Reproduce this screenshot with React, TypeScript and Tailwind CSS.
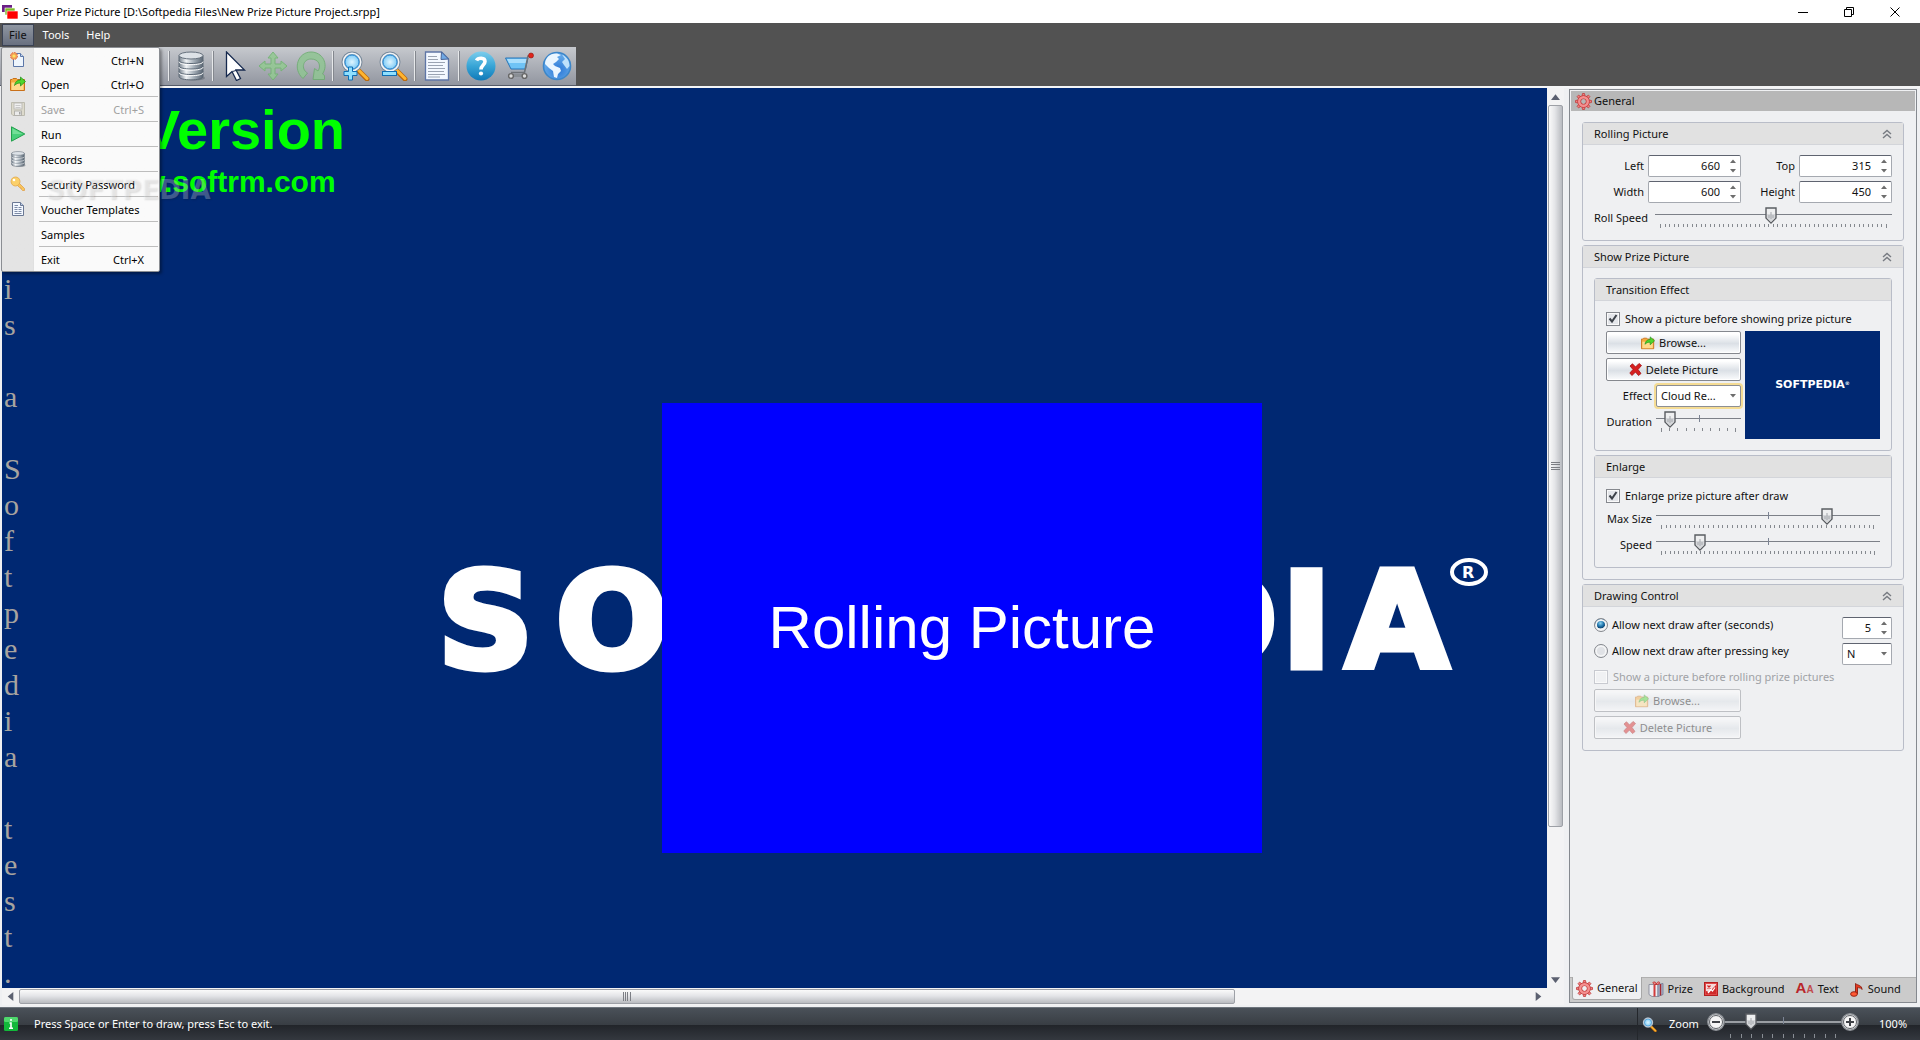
import React, { useState } from "react";

type Kids = { children?: React.ReactNode };

/* ---------- icons ---------- */

const AppIcon = () => (
  <svg width="16" height="14" viewBox="0 0 16 14" aria-hidden="true">
    <rect x="0" y="0" width="10" height="7" fill="#6b1f86" />
    <rect x="3" y="3" width="10" height="7" fill="#7db928" stroke="#fff" strokeWidth=".6" />
    <rect x="5" y="6" width="11" height="8" fill="#f00" stroke="#fff" strokeWidth=".6" />
  </svg>
);

const NewIcon = () => (
  <svg width="16" height="16" viewBox="0 0 16 16" aria-hidden="true">
    <path d="M3.500 3.500V14.500H13.500V4.500L10.500 1.500H5Z" fill="#eef5fc" stroke="#5c77a8" />
    <path d="M10.500 1.500V4.500H13.500" fill="#c4d6ee" stroke="#5c77a8" />
    <circle cx="4" cy="4" r="3.500" fill="#f0a05a" />
    <circle cx="4" cy="4" r="3.500" fill="none" stroke="#e2603a" strokeDasharray="1.500 1.200" />
    <circle cx="4" cy="4" r="1.600" fill="#ffe45c" />
  </svg>
);

const OpenIcon = ({ size = 16 }: { size?: number }) => (
  <svg width={size} height={size} viewBox="0 0 16 16" aria-hidden="true">
    <path d="M.5 14.500V3.500H2L3 2.500H6.500L7.500 3.500H14.500V14.500Z" fill="#f5a93b" stroke="#c9701a" />
    <path d="M1.500 14V6.500H13.500V14Z" fill="#ffd98a" />
    <path d="M4.500 9.500C5 6 7 4 10.500 4V1L15.500 5.500L10.500 10V7C8 7 6 7.800 4.500 9.500Z" fill="#4fd62c" stroke="#1c8a17" strokeWidth=".7" />
  </svg>
);

const SaveIcon = () => (
  <svg width="16" height="16" viewBox="0 0 16 16" aria-hidden="true" opacity=".45">
    <path d="M1.500 1.500H14.500V14.500H3L1.500 13Z" fill="#d6d0b0" stroke="#8d8a70" />
    <rect x="4" y="2" width="8" height="6" fill="#fff" stroke="#8d8b80" />
    <path d="M5.500 4.500H10.500M5.500 6.500H10.500" stroke="#aaa" />
    <rect x="4.500" y="10" width="7" height="4.500" fill="#f4f4f4" stroke="#77756a" />
    <rect x="9" y="11" width="1.500" height="2.500" fill="#555" />
  </svg>
);

const RunIcon = () => (
  <svg width="16" height="16" viewBox="0 0 16 16" aria-hidden="true">
    <path d="M1.500 .8L14.800 8L1.500 15.200Z" fill="#48cf7a" stroke="#22a04c" />
    <path d="M2.500 2.500L12.500 8H2.500Z" fill="#86e6a4" opacity=".7" />
  </svg>
);

const DbIcon = ({ size = 16, id }: { size?: number; id: string }) => (
  <svg width={size} height={size} viewBox="0 0 30 30" aria-hidden="true">
    <defs>
      <linearGradient id={id} x1="0" x2="1">
        <stop offset="0" stopColor="#75808c" />
        <stop offset=".3" stopColor="#f1f4f6" />
        <stop offset=".6" stopColor="#a9b3bc" />
        <stop offset="1" stopColor="#5a6673" />
      </linearGradient>
    </defs>
    <ellipse cx="19" cy="27" rx="10" ry="2.500" fill="#555d68" opacity=".5" />
    <path d="M3 4.500V25.500C3 30 27 30 27 25.500V4.500Z" fill={`url(#${id})`} stroke="#5d6874" />
    <ellipse cx="15" cy="4.500" rx="12" ry="3.500" fill="#dde2e7" stroke="#66717d" />
    {[9.5, 15, 20.5].map((y) => (
      <g key={y} fill="none">
        <path d={`M3 ${y}C3 ${y + 4} 27 ${y + 4} 27 ${y}`} stroke="#5f6b78" />
        <path d={`M3 ${y + 1.2}C3 ${y + 5.2} 27 ${y + 5.2} 27 ${y + 1.2}`} stroke="#fff" />
      </g>
    ))}
  </svg>
);

const KeyIcon = () => (
  <svg width="16" height="16" viewBox="0 0 16 16" aria-hidden="true">
    <path d="M6.500 8.500L8.500 6.500L14.500 12.500V14.500H12.500L11.500 13.500V12.500H10.500V11.500H9.500Z" fill="#f9c65c" stroke="#dfa04a" strokeWidth=".8" />
    <circle cx="5.500" cy="5.500" r="4.500" fill="#fbd06a" stroke="#dfa64a" strokeWidth=".8" />
    <circle cx="4" cy="4" r="1.300" fill="#fff" />
  </svg>
);

const DocIcon = ({ size = 16 }: { size?: number }) => (
  <svg width={size} height={size} viewBox="0 0 30 30" aria-hidden="true">
    <path d="M3.500 1H19.500L26.500 8V29H3.500Z" fill="#f3f8ff" stroke="#5f76a6" strokeWidth="1.300" />
    <path d="M19.500 1L19 8.500L26.500 8Z" fill="#6fa8e4" stroke="#4a6496" />
    <path d="M6 5.500H15M6 8.500H16M6 11.500H23M6 14.500H21M6 17.500H23M6 20.500H22M6 23.500H23M6 26H18" stroke="#9aa3b2" strokeWidth="1.200" />
  </svg>
);

const VoucherIcon = () => (
  <svg width="16" height="16" viewBox="0 0 16 16" aria-hidden="true">
    <path d="M2.500 1.500H10.500L13.500 4.500V14.500H2.500Z" fill="#f3f8ff" stroke="#6a7894" />
    <path d="M10.500 1.500V4.500H13.500" fill="#b9cbe8" stroke="#6a7894" />
    <path d="M4.500 4.500H8M4.500 6.500H7.500M8.500 6.500H11.500M4.500 8.500H7.500M8.500 8.500H11.500M4.500 10.500H7.500M8.500 10.500H11.500M4.500 12.500H11.500" stroke="#7d8ba6" />
  </svg>
);

const CursorIcon = () => (
  <svg width="30" height="30" viewBox="0 0 30 30" aria-hidden="true">
    <path d="M6.500 1V25.500L12 20.500L16.500 29.500L20.500 27.500L16 19H24.500Z" fill="#fff" stroke="#16294e" strokeWidth="1.300" />
    <path d="M12.500 20.500L16 19.500" stroke="#16294e" strokeWidth="1" />
  </svg>
);

const MoveIcon = () => (
  <svg width="30" height="30" viewBox="0 0 30 30" aria-hidden="true" opacity=".85">
    <path d="M15 1L20 7H17V13H23V10L29 15L23 20V17H17V23H20L15 29L10 23H13V17H7V20L1 15L7 10V13H13V7H10Z" fill="#93c992" stroke="#6fb56f" />
  </svg>
);

const RotateIcon = () => (
  <svg width="32" height="30" viewBox="0 0 32 30" aria-hidden="true" opacity=".85">
    <path d="M8 27.500L12.500 22C5.500 18 8 8 16 8C24 8 26.500 15 23 20L19.500 17.500L18 28.500H29.500V24.500L27.500 23C34 13 27.500 1 16 1C3 1-3 18 8 27.500Z" fill="#90c593" stroke="#6dae70" />
  </svg>
);

const LensIcon = ({ size = 30, mode, id }: { size?: number; mode?: "in" | "out"; id: string }) => (
  <svg width={size} height={size} viewBox="0 0 30 30" aria-hidden="true">
    <defs>
      <radialGradient id={id}>
        <stop offset="0" stopColor="#dff5ff" />
        <stop offset="1" stopColor="#66c1f4" />
      </radialGradient>
    </defs>
    <path d="M17 18L27 28" stroke="#b96a12" strokeWidth="5" strokeLinecap="round" />
    <path d="M17.500 18L27 27.500" stroke="#ffb52e" strokeWidth="3" strokeLinecap="round" />
    <circle cx="12" cy="11" r="9" fill={`url(#${id})`} stroke="#778899" strokeWidth="3" />
    <circle cx="12" cy="11" r="8.700" fill="none" stroke="#f2f5f8" strokeWidth="1.600" />
    <circle cx="12" cy="11" r="7" fill="none" stroke="#2c86cf" />
    {mode === "in" && <path d="M8.500 16H12.500V20.500H17V24.500H12.500V29H8.500V24.500H4V20.500H8.500Z" fill="#8fe0ff" stroke="#0e6fb5" />}
    {mode === "out" && <rect x="4.500" y="20.500" width="14" height="4" fill="#8fe0ff" stroke="#0e6fb5" />}
  </svg>
);

const HelpIcon = () => (
  <svg width="30" height="30" viewBox="0 0 30 30" aria-hidden="true">
    <defs>
      <linearGradient id="help-fill" x2="0" y2="1">
        <stop offset="0" stopColor="#7ccdec" />
        <stop offset=".5" stopColor="#38a5d6" />
        <stop offset="1" stopColor="#0f79b8" />
      </linearGradient>
    </defs>
    <circle cx="15" cy="15" r="14.500" fill="url(#help-fill)" />
    <path d="M10.500 9.500C12 6.500 19 6 19 10.500C19 14 15 14 15 18.500" fill="none" stroke="#fff" strokeWidth="3.600" />
    <circle cx="15" cy="22.500" r="2.100" fill="#fff" />
  </svg>
);

const CartIcon = () => (
  <svg width="30" height="30" viewBox="0 0 30 30" aria-hidden="true">
    <path d="M1.500 7H24L21.500 18H7Z" fill="#6fc3f5" stroke="#2775b8" />
    <path d="M3 8H23L22.300 12H5Z" fill="#a9defc" />
    <path d="M27 5H24L20.500 21.500H7" fill="none" stroke="#6d7278" strokeWidth="1.600" />
    <path d="M4 24.500H23" stroke="#898e94" strokeWidth="3" />
    <circle cx="7" cy="25" r="2.400" fill="#ddd" stroke="#666" strokeWidth="1.400" />
    <circle cx="20.500" cy="25" r="2.400" fill="#ddd" stroke="#666" strokeWidth="1.400" />
    <circle cx="27" cy="4.500" r="2.500" fill="#e0251b" stroke="#8d1610" strokeWidth=".6" />
  </svg>
);

const GlobeIcon = () => (
  <svg width="30" height="30" viewBox="0 0 30 30" aria-hidden="true">
    <defs>
      <radialGradient id="globe-fill" cx=".55" cy=".65">
        <stop offset="0" stopColor="#2c78d6" />
        <stop offset="1" stopColor="#5fa5e8" />
      </radialGradient>
    </defs>
    <circle cx="15" cy="15" r="13.500" fill="url(#globe-fill)" stroke="#3c86c9" strokeWidth="1.600" />
    <path d="M3 13C3 7 8 2 15 2.500L19 4L15 6L17 8L14 11L11 13L13 15L18 17L19 20L16 23L15 27L12 26L11 20L7 17Z" fill="#eaf6ff" />
    <path d="M20 3.500C25 6 27.500 10 27.500 15L25 18L22 14L20 11L23 8Z" fill="#bfe2fb" />
  </svg>
);

const GearIcon = () => (
  <svg width="17" height="17" viewBox="0 0 17 17" aria-hidden="true">
    {[0, 45, 90, 135, 180, 225, 270, 315].map((a) => (
      <path key={a} d="M7 3.500L7.500 .5H9.500L10 3.500Z" fill="#f08080" stroke="#c23b3b" strokeWidth=".8" transform={`rotate(${a} 8.500 8.500)`} />
    ))}
    <circle cx="8.500" cy="8.500" r="4.300" fill="none" stroke="#c23b3b" strokeWidth="3.800" />
    <circle cx="8.500" cy="8.500" r="4.300" fill="none" stroke="#f49090" strokeWidth="2.400" />
  </svg>
);

const GiftIcon = () => (
  <svg width="16" height="16" viewBox="0 0 16 16" aria-hidden="true">
    <path d="M1 3.500H10V15.500H4L1 13.500Z" fill="#ecedf2" stroke="#7d8292" strokeWidth=".8" />
    <path d="M10 3.500L15 2.500V13.500L10 15.500Z" fill="#a9b4cc" stroke="#6c7690" strokeWidth=".8" />
    <path d="M6.500 3.500V15.500" stroke="#d23c3c" strokeWidth="2" />
    <path d="M12.500 3V14.500" stroke="#a42a30" strokeWidth="1.500" />
    <path d="M8 3.500C5 3.500 4 1 6 1S8 2 8 3.500C8.500 1 12 0 11.500 2S9 3 8 3.500" fill="#f4a3a3" stroke="#c02f2f" />
  </svg>
);

const BackgroundIcon = () => (
  <svg width="14" height="14" viewBox="0 0 14 14" aria-hidden="true">
    <rect x=".5" y=".5" width="13" height="13" fill="#e04848" stroke="#b52020" />
    <rect x="2" y="2" width="10" height="10" fill="#f6dada" />
    <path d="M2 12V9L5 10L12 3V12Z" fill="#cf2b2b" />
    <path d="M4 11L7 7.500L8.500 9L11 5.500" stroke="#fff" strokeWidth="1.200" fill="none" />
    <path d="M3.500 3.500L6.500 6.500M3.500 6.500L6.500 3.500" stroke="#c22" strokeWidth="1.200" />
  </svg>
);

const TextIcon = () => (
  <span className="flex items-baseline font-['Liberation_Sans'] font-bold text-[#b9262a]" aria-hidden="true">
    <span className="text-[15px] leading-[14px]">A</span>
    <span className="text-[10px] leading-[14px] text-[#c04a4c]">A</span>
  </span>
);

const NoteIcon = () => (
  <svg width="14" height="15" viewBox="0 0 14 15" aria-hidden="true">
    <path d="M5.500 11.500V1.500C7.500 3.500 12 3 12 7.500C12 5.500 8.500 6 7.500 5.500V12" fill="#e6391e" stroke="#8d1d10" strokeWidth=".9" />
    <ellipse cx="4" cy="12" rx="3.400" ry="2.300" fill="#ff5a35" stroke="#8d1d10" strokeWidth=".9" />
  </svg>
);

const CrossIcon = () => (
  <svg width="13" height="13" viewBox="0 0 13 13" aria-hidden="true">
    <path d="M1 3L3.500 .8L6.500 4L10 .5L12.500 2.500L9 6.500L12 10.500L9.500 12.500L6.500 9L3 12.500L.8 10L4 6.500Z" fill="#d62020" stroke="#a40f0f" strokeWidth=".8" />
  </svg>
);

const Chevrons = () => (
  <svg width="10" height="10" viewBox="0 0 10 10" aria-hidden="true" fill="none" stroke="#777b82" strokeWidth="1.400">
    <path d="M1 5L5 1.500L9 5M1 9L5 5.500L9 9" />
  </svg>
);

const ThumbShape = () => (
  <svg width="12" height="17" viewBox="0 0 12 17" aria-hidden="true">
    <path d="M1 1H11V11L6 16L1 11Z" fill="#eeeff0" stroke="#5a5d62" strokeWidth="1.400" />
    <path d="M2 7H10V11L6 15L2 11Z" fill="#d5d7da" />
    <path d="M6 5V12M4 8V11M8 8V11" stroke="#a4a7ac" />
  </svg>
);

const Arrow = ({ dir }: { dir: "up" | "down" | "left" | "right" }) => {
  const d = { up: "M0 7L4 2L8 7Z", down: "M0 2L4 7L8 2Z", left: "M6.500 0V8L1.500 4Z", right: "M1.500 0V8L6.500 4Z" }[dir];
  return (
    <svg width="9" height="9" viewBox="0 0 8 8" aria-hidden="true">
      <path d={d} fill="#5b6070" />
    </svg>
  );
};

/* ---------- form controls ---------- */

function Slider({ id, value, ticks, mid = false, dark = false }: { id: string; value: number; ticks: number; mid?: boolean; dark?: boolean }) {
  const [v, setV] = useState(value);
  return (
    <div className="relative h-[22px] min-w-0 flex-1">
      <div className={dark ? "absolute inset-x-0 top-[8px] h-[2px] bg-[#9a9ea3]" : "absolute inset-x-0 top-[7px] h-px bg-[#7c8088]"} />
      {mid && <div className="absolute left-1/2 top-[4px] h-[7px] w-px bg-[#7c8494]" />}
      <div className={`absolute inset-x-[5px] flex justify-between ${dark ? "top-[21px]" : "top-[17px]"}`}>
        {Array.from({ length: ticks }, (_, i) => (
          <i key={i} className={`w-px ${dark ? "h-[4px] bg-[#888d94]" : i === 0 || i === ticks - 1 ? "h-[4px] bg-[#85898f]" : "h-[3px] bg-[#85898f]"}`} />
        ))}
      </div>
      <div className="absolute inset-x-[6px] top-0 h-[17px]">
        <div className="absolute top-0 -ml-[6px]" style={{ left: `${v}%` }}>
          <ThumbShape />
        </div>
      </div>
      <input id={id} type="range" aria-label={id} value={v} onChange={(e) => setV(Number(e.target.value))} className="absolute inset-0 h-full w-full opacity-0" />
    </div>
  );
}

function Spin({ id, value }: { id: string; value: string }) {
  return (
    <div className="flex h-[22px] items-stretch rounded-[2px] border border-[#a5a9b0] border-t-[#5f6470] bg-white">
      <input id={id} defaultValue={value} className="w-0 min-w-0 flex-1 bg-transparent text-right text-[11px] outline-none" />
      <div className="flex w-[20px] flex-col items-center justify-between py-[3px] pl-[6px]">
        <button type="button" aria-label="Increase" className="h-[4px]">
          <svg width="6" height="4" viewBox="0 0 6 4" className="block"><path d="M0 4L3 .5L6 4Z" fill="#6d6d6d" /></svg>
        </button>
        <button type="button" aria-label="Decrease" className="h-[4px]">
          <svg width="6" height="4" viewBox="0 0 6 4" className="block"><path d="M0 0L3 3.500L6 0Z" fill="#6d6d6d" /></svg>
        </button>
      </div>
    </div>
  );
}

function Select({ id, options, glow }: { id: string; options: string[]; glow?: boolean }) {
  return (
    <div className={`relative h-[22px] min-w-0 flex-1 rounded-[2px] border bg-white ${glow ? "border-[#8d8f94] shadow-[0_0_0_2px_#f5dc94]" : "border-[#a5a9b0] border-t-[#5f6470]"}`}>
      <select id={id} aria-label={id} className="h-full w-full appearance-none truncate bg-transparent pl-[4px] pr-[14px] outline-none">
        {options.map((o) => <option key={o}>{o}</option>)}
      </select>
      <svg width="6" height="4" viewBox="0 0 6 4" className="pointer-events-none absolute right-[4px] top-[8px]" aria-hidden="true">
        <path d="M0 0L3 3.500L6 0Z" fill="#6d6d6d" />
      </svg>
    </div>
  );
}

function Check({ id, label, checked, disabled }: { id: string; label: string; checked?: boolean; disabled?: boolean }) {
  return (
    <div className={`flex h-[16px] items-center gap-[5px] ${disabled ? "text-[#a0a2a6]" : ""}`}>
      <span className="relative flex h-[14px] w-[14px]">
        <input
          id={id}
          type="checkbox"
          defaultChecked={checked}
          disabled={disabled}
          className="peer h-[14px] w-[14px] appearance-none border border-[#85888e] bg-[#e4e6ea] shadow-[inset_0_0_0_1px_#fafafa] disabled:border-[#c8cad0] disabled:bg-[#f0f1f3]"
        />
        <svg width="14" height="14" viewBox="0 0 14 14" className="pointer-events-none absolute inset-0 hidden peer-checked:block" aria-hidden="true">
          <path d="M3.500 6.500L6 9.500L10.500 3" fill="none" stroke="#3d4249" strokeWidth="2" />
        </svg>
      </span>
      <label htmlFor={id}>{label}</label>
    </div>
  );
}

function Radio({ id, label, checked }: { id: string; label: string; checked?: boolean }) {
  return (
    <div className="flex h-[16px] flex-1 items-center gap-[4px]">
      <input
        id={id}
        name="next-draw"
        type="radio"
        defaultChecked={checked}
        className="h-[14px] w-[14px] appearance-none rounded-full border border-[#85888e] bg-[#e0e2e6] shadow-[inset_0_0_0_2px_#f4f5f6] checked:bg-[radial-gradient(circle_at_45%_35%,#8fd3f0_0,#2379b0_30%,#0f4674_48%,#e8eaed_54%)]"
      />
      <label htmlFor={id}>{label}</label>
    </div>
  );
}

function PushButton({ children, disabled }: Kids & { disabled?: boolean }) {
  return (
    <button
      type="button"
      disabled={disabled}
      className="flex h-[23px] w-full items-center justify-center gap-[4px] rounded-[2px] border border-[#85888e] bg-linear-to-b from-white from-10% via-[#dbe0e6] via-55% to-[#fbfcfd] shadow-[inset_0_0_0_1px_#fff] disabled:opacity-45"
    >
      {children}
    </button>
  );
}

function Group({ title, collapsible, children }: Kids & { title: string; collapsible?: boolean }) {
  return (
    <section className="rounded-[3px] border border-[#b9bdc8]">
      <header className="flex h-[22px] items-center justify-between border-b border-[#d3d5da] bg-[#e1e1e1] px-[11px]">
        <h2>{title}</h2>
        {collapsible && <button type="button" aria-label={`Collapse ${title}`}><Chevrons /></button>}
      </header>
      <div className="flex flex-col gap-[4px] px-[11px] pb-[11px] pt-[10px]">{children}</div>
    </section>
  );
}

/* ---------- top of the window ---------- */

function TitleBar() {
  return (
    <header className="flex h-[23px] shrink-0 items-center bg-white pl-[2px] pr-[2px] text-black">
      <AppIcon />
      <h1 className="ml-[5px] flex-1 text-[11px]">Super Prize Picture [D:\Softpedia Files\New Prize Picture Project.srpp]</h1>
      {[
        ["Minimize", "M0 5.500H10"],
        ["Restore", "M.5 2.500H7.500V9.500H.5ZM2.500 2.500V.5H9.500V7.500H7.500"],
        ["Close", "M.5 .5L9.500 9.500M9.500 .5L.5 9.500"],
      ].map(([name, d]) => (
        <button key={name} type="button" aria-label={name} className="flex h-[20px] w-[46px] items-center justify-center">
          <svg width="10" height="10" viewBox="0 0 10 10" fill="none" stroke="#000"><path d={d} /></svg>
        </button>
      ))}
    </header>
  );
}

const fileMenu = [
  { icon: <NewIcon />, label: "New", keys: "Ctrl+N" },
  { icon: <OpenIcon />, label: "Open", keys: "Ctrl+O", line: true },
  { icon: <SaveIcon />, label: "Save", keys: "Ctrl+S", line: true, disabled: true },
  { icon: <RunIcon />, label: "Run", line: true },
  { icon: <DbIcon id="menu-db" />, label: "Records", line: true },
  { icon: <KeyIcon />, label: "Security Password", line: true },
  { icon: <VoucherIcon />, label: "Voucher Templates", line: true },
  { icon: null, label: "Samples", line: true },
  { icon: null, label: "Exit", keys: "Ctrl+X" },
];

function FileMenu() {
  return (
    <div role="menu" className="absolute left-[-1px] top-[23px] z-20 w-[159px] rounded-[2px] border border-[#8b8e93] bg-linear-to-r from-[#e4e4e4] from-[31px] via-[#c6c6c6] via-[31px] to-[#fafafa] to-[32px] shadow-[2px_2px_3px_rgba(0,0,0,0.35)]">
      {fileMenu.map((m) => (
        <button key={m.label} role="menuitem" type="button" disabled={m.disabled} className="flex w-full text-left text-black disabled:text-[#a0a0a0]">
          <span className="flex h-[24px] w-[37px] items-center pl-[8px]">{m.icon}</span>
          <span className={`mr-px flex flex-1 flex-col ${m.line ? "border-b border-[#bdbdbd]" : ""}`}>
            <span className="flex h-[24px] items-center justify-between pl-[2px] pr-[14px] pt-px">
              <span className="whitespace-nowrap">{m.label}</span>
              <span>{m.keys}</span>
            </span>
          </span>
        </button>
      ))}
    </div>
  );
}

function MenuBar() {
  return (
    <nav className="relative flex h-[24px] shrink-0 items-start bg-[#525252] pl-[2px] pt-px text-white">
      <div className="relative">
        <button type="button" className="h-[22px] border border-[#3a4254] bg-linear-to-b from-[#8f96a1] to-[#697080] px-[6px] text-[#111]">File</button>
        <FileMenu />
      </div>
      <button type="button" className="h-[22px] px-[9px]">Tools</button>
      <button type="button" className="h-[22px] px-[8px]">Help</button>
    </nav>
  );
}

const Sep = () => <span className="mx-[2px] h-[30px] w-[2px] border-l border-[#e6e8ea] bg-[#83878e]" />;

const Tool = ({ name, children }: Kids & { name: string }) => (
  <button type="button" aria-label={name} className="flex h-full w-[38px] items-center justify-center">{children}</button>
);

function ToolBar() {
  return (
    <div className="flex h-[41px] shrink-0 items-start border-b-2 border-[#f4f5f6] bg-[#525252]">
      <div className="flex h-[39px] items-center border-b border-[#555b68] bg-linear-to-b from-[#c6c9ce] to-[#9296a0] pl-[166px]">
        <Sep />
        <Tool name="Records"><DbIcon size={30} id="tool-db" /></Tool>
        <Sep />
        <Tool name="Select"><CursorIcon /></Tool>
        <Tool name="Move"><MoveIcon /></Tool>
        <Tool name="Rotate"><RotateIcon /></Tool>
        <Sep />
        <Tool name="Zoom in"><LensIcon mode="in" id="lens-in" /></Tool>
        <Tool name="Zoom out"><LensIcon mode="out" id="lens-out" /></Tool>
        <Sep />
        <Tool name="Voucher"><DocIcon size={30} /></Tool>
        <Sep />
        <Tool name="Help"><HelpIcon /></Tool>
        <Tool name="Buy"><CartIcon /></Tool>
        <Tool name="Web site"><GlobeIcon /></Tool>
      </div>
    </div>
  );
}

/* ---------- canvas ---------- */

function Canvas() {
  return (
    <div className="relative min-w-0 flex-1 overflow-hidden bg-[#002872]">
      <p className="absolute left-[10px] top-[10px] whitespace-nowrap font-['Liberation_Sans'] text-[56px] font-bold leading-[64px] text-[#0f0]">Trial Version</p>
      <p className="absolute left-[93px] top-[76px] whitespace-nowrap font-['Liberation_Sans'] text-[30px] font-bold leading-[36px] text-[#0f0]">www.softrm.com</p>
      <div className="absolute left-[2px] top-[3px] font-['Liberation_Serif'] text-[30px] leading-[36px] text-[#a8a49f]">
        {"This is a Softpedia test.".split("").map((c, i) => <span key={i} className="block h-[36px]">{c}</span>)}
      </div>
      <svg className="absolute left-[430px] top-[460px]" width="1070" height="140" viewBox="0 0 1070 140" aria-label="Softpedia logo">
        <g fill="#fff" stroke="#fff" strokeWidth="7" fontFamily="DejaVu Sans" fontWeight="700" fontSize="132">
          <text x="6" y="119">S</text>
          <text x="124" y="119">O</text>
          <text x="736" y="119">D</text>
          <text x="850" y="119">I</text>
          <text x="914" y="119">A</text>
        </g>
        <ellipse cx="1037" cy="24" rx="17" ry="12" fill="none" stroke="#fff" strokeWidth="4" />
        <text x="1030" y="30" fill="#fff" fontFamily="DejaVu Sans" fontWeight="700" fontSize="16">R</text>
      </svg>
      <div className="absolute left-[660px] top-[315px] flex h-[450px] w-[600px] items-center justify-center bg-[#00f] font-['Liberation_Sans'] text-[60px] leading-[70px] text-white">
        Rolling Picture
      </div>
    </div>
  );
}

const track = "flex shrink-0 items-center bg-[#f3f3f4]";

function Workspace() {
  return (
    <main className="flex min-w-0 flex-1 flex-col pl-[2px]">
      <div className="flex min-h-0 flex-1">
        <Canvas />
        <div className={`${track} w-[17px] flex-col`}>
          <button type="button" aria-label="Scroll up" className="flex h-[17px] items-center"><Arrow dir="up" /></button>
          <div className="flex w-[15px] flex-[722] items-center justify-center rounded-[2px] border border-[#9da0a6] bg-linear-to-r from-[#fafafa] via-[#e4e5e8] via-45% to-[#b9bbc0]">
            <span className="flex h-[8px] w-[9px] flex-col justify-between">
              {[0, 1, 2, 3].map((i) => <i key={i} className="h-px bg-[#7c7e84]" />)}
            </span>
          </div>
          <div className="flex-[144]" />
          <button type="button" aria-label="Scroll down" className="flex h-[17px] items-center"><Arrow dir="down" /></button>
        </div>
      </div>
      <div className={`${track} mb-[2px] h-[17px] pr-[17px]`}>
        <button type="button" aria-label="Scroll left" className="flex w-[17px] justify-center"><Arrow dir="left" /></button>
        <div className="flex h-[15px] flex-[1216] items-center justify-center rounded-[2px] border border-[#9da0a6] bg-linear-to-b from-[#fafafa] via-[#e4e5e8] via-45% to-[#b9bbc0]">
          <span className="flex h-[9px] w-[8px] justify-between">
            {[0, 1, 2, 3].map((i) => <i key={i} className="w-px bg-[#7c7e84]" />)}
          </span>
        </div>
        <div className="flex-[296]" />
        <button type="button" aria-label="Scroll right" className="flex w-[17px] justify-center"><Arrow dir="right" /></button>
      </div>
    </main>
  );
}

/* ---------- properties panel ---------- */

const tabs = [
  { name: "General", icon: <GearIcon /> },
  { name: "Prize", icon: <GiftIcon /> },
  { name: "Background", icon: <BackgroundIcon /> },
  { name: "Text", icon: <TextIcon /> },
  { name: "Sound", icon: <NoteIcon /> },
];

function Panel() {
  return (
    <aside className="mb-[4px] ml-[5px] mr-[3px] mt-px flex w-[348px] shrink-0 flex-col border border-[#85898f]">
      <h2 className="mx-px mt-px flex h-[20px] items-center gap-[2px] bg-[#b7b7b7] pl-[4px]"><GearIcon />General</h2>
      <div className="flex min-h-0 flex-1 flex-col gap-[4px] px-[12px] pt-[11px]">
        <Group title="Rolling Picture" collapsible>
          <div className="grid grid-cols-[50px_93px_1fr_93px] items-center gap-[4px]">
            <label htmlFor="left" className="text-right">Left</label>
            <Spin id="left" value="660" />
            <label htmlFor="top" className="text-right">Top</label>
            <Spin id="top" value="315" />
            <label htmlFor="width" className="text-right">Width</label>
            <Spin id="width" value="600" />
            <label htmlFor="height" className="text-right">Height</label>
            <Spin id="height" value="450" />
          </div>
          <div className="flex items-center gap-[4px]">
            <label htmlFor="roll" className="w-[57px] whitespace-nowrap">Roll Speed</label>
            <Slider id="roll" value={49} ticks={51} />
          </div>
        </Group>

        <Group title="Show Prize Picture" collapsible>
          <Group title="Transition Effect">
            <Check id="before" label="Show a picture before showing prize picture" checked />
            <div className="flex gap-[4px]">
              <div className="flex w-[135px] flex-col gap-[4px]">
                <PushButton><OpenIcon size={14} />Browse...</PushButton>
                <PushButton><CrossIcon />Delete Picture</PushButton>
                <div className="flex items-center gap-[4px]">
                  <label htmlFor="effect" className="w-[46px] text-right">Effect</label>
                  <Select id="effect" options={["Cloud Re...", "Fade"]} glow />
                </div>
                <div className="flex items-center gap-[4px]">
                  <label htmlFor="duration" className="w-[46px] text-right">Duration</label>
                  <Slider id="duration" value={11} ticks={10} mid />
                </div>
              </div>
              <div className="flex h-[108px] flex-1 items-center justify-center bg-[#002872] font-['DejaVu_Sans'] text-[11px] font-bold text-white">
                SOFTPEDIA<sup className="text-[5px]">®</sup>
              </div>
            </div>
          </Group>
          <Group title="Enlarge">
            <Check id="enlarge" label="Enlarge prize picture after draw" checked />
            <div className="flex items-center gap-[4px]">
              <label htmlFor="max" className="w-[46px] whitespace-nowrap text-right">Max Size</label>
              <Slider id="max" value={78} ticks={46} mid />
            </div>
            <div className="flex items-center gap-[4px]">
              <label htmlFor="speed" className="w-[46px] text-right">Speed</label>
              <Slider id="speed" value={18} ticks={50} mid />
            </div>
          </Group>
        </Group>

        <Group title="Drawing Control" collapsible>
          <div className="flex h-[22px]">
            <Radio id="seconds" label="Allow next draw after (seconds)" checked />
            <div className="w-[50px]"><Spin id="secs" value="5" /></div>
          </div>
          <div className="flex h-[22px]">
            <Radio id="key" label="Allow next draw after pressing key" />
            <div className="flex w-[50px]"><Select id="keyname" options={["N", "M"]} /></div>
          </div>
          <Check id="rolling" label="Show a picture before rolling prize pictures" disabled />
          <div className="flex w-[147px] flex-col gap-[4px]">
            <PushButton disabled><OpenIcon size={14} />Browse...</PushButton>
            <PushButton disabled><CrossIcon />Delete Picture</PushButton>
          </div>
        </Group>
      </div>
      <nav className="flex h-[25px] items-start border-t border-[#b0b0b0] bg-[#cbcbcb] pl-[2px]">
        {tabs.map((t, i) => (
          <button
            key={t.name}
            type="button"
            className={`flex items-center gap-[4px] whitespace-nowrap ${i === 0 ? "-mt-px h-[23px] rounded-b-[3px] border border-t-0 border-[#a8a8a8] bg-[#eff0f2] px-[3px]" : "h-[22px] pl-[6px] pr-[5px]"}`}
          >
            {t.icon}
            {t.name}
          </button>
        ))}
      </nav>
    </aside>
  );
}

/* ---------- status bar ---------- */

const RoundButton = ({ name, d }: { name: string; d: string }) => (
  <button type="button" aria-label={name} className="shrink-0">
    <svg width="18" height="18" viewBox="0 0 18 18" className="block">
      <circle cx="9" cy="9" r="8.200" fill="#dfe1e3" stroke="#8d9196" strokeWidth="1.400" />
      <circle cx="9" cy="9" r="6.500" fill="#f5f5f5" stroke="#5e6166" />
      <path d={d} stroke="#3f4247" strokeWidth="2" />
    </svg>
  </button>
);

function StatusBar() {
  return (
    <footer className="flex h-[33px] shrink-0 items-center border-t border-[#6d747c] bg-linear-to-b from-[#4a5159] via-[#393e44] via-52% to-[#33373e] text-white">
      <div className="flex h-full flex-1 items-center bg-linear-to-b from-transparent from-52% via-[#212429] via-52% to-[#34383f] pl-[4px]">
        <svg width="14" height="14" viewBox="0 0 14 14" aria-hidden="true">
          <rect width="14" height="14" rx="1.500" fill="#12b83a" />
          <rect width="14" height="5" rx="1.500" fill="#4fd86d" />
          <path d="M7 2V4M5.500 6H7V11M5 11.200H9" stroke="#fff" strokeWidth="1.600" fill="none" />
        </svg>
        <p className="ml-[16px]">Press Space or Enter to draw, press Esc to exit.</p>
      </div>
      <div className="flex h-full w-[283px] shrink-0 items-center border-l border-[#24272c] bg-linear-to-b from-transparent from-52% via-[#212429] via-52% to-[#34383f] pl-[4px]">
        <LensIcon size={15} id="lens-status" />
        <label htmlFor="zoom" className="ml-[12px] w-[38px]">Zoom</label>
        <div className="-mt-[4px] flex w-[152px] items-center">
          <RoundButton name="Zoom out" d="M5 9H13" />
          <div className="-my-[2px] flex flex-1 pt-[4px]"><Slider id="zoom" value={19} ticks={11} mid dark /></div>
          <RoundButton name="Zoom in" d="M5 9H13M9 5V13" />
        </div>
        <span className="ml-[20px]">100%</span>
      </div>
    </footer>
  );
}

export default function App() {
  return (
    <div className="relative flex h-screen min-h-[900px] flex-col overflow-hidden bg-[#eff0f2] font-['Noto_Sans',sans-serif] text-[11px] leading-[16px] text-[#111]">
      <TitleBar />
      <MenuBar />
      <ToolBar />
      <div className="flex min-h-0 flex-1">
        <Workspace />
        <Panel />
      </div>
      <StatusBar />
      <div aria-hidden="true" className="pointer-events-none absolute left-[46px] top-[174px] z-30 font-['DejaVu_Sans'] text-[26px] font-bold leading-[32px] text-white/25 [text-shadow:1px_1px_2px_rgba(0,0,0,0.12)]">
        SOFTPEDIA
      </div>
    </div>
  );
}
